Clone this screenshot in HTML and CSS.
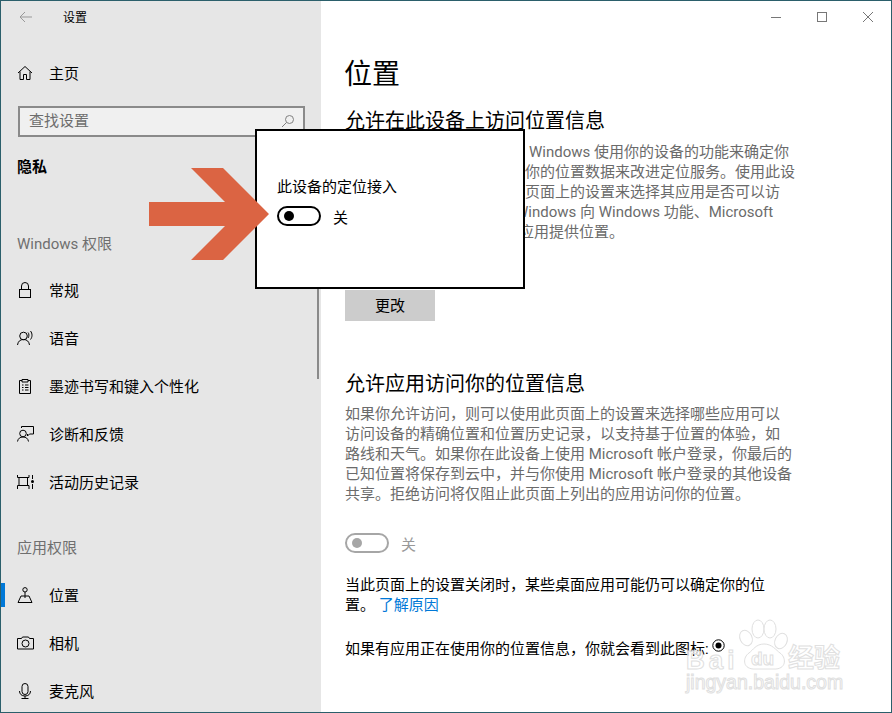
FILE: index.html
```html
<!DOCTYPE html>
<html lang="zh-CN">
<head>
<meta charset="utf-8">
<title>设置</title>
<link rel="stylesheet" href="styles.css">
</head>
<body>
<div class="window">
  <aside class="sidebar">
    <div class="titlebar">
      <svg class="back" width="14" height="12" viewBox="0 0 14 12"><path d="M13 6H1M6 1 1 6l5 5"/></svg>
      <span class="apptitle">设置</span>
    </div>
    <div class="item home">
      <svg class="icon" width="16" height="16" viewBox="0 0 16 16"><path d="M1 8 8 1.500 15 8M3 6.500V14.500H6.500V9.500H9.500V14.500H13V6.500"/></svg>
      <span>主页</span>
    </div>
    <div class="search">
      <span>查找设置</span>
      <svg class="lens" width="14" height="14" viewBox="0 0 14 14"><circle cx="8.500" cy="5.500" r="4"/><path d="M5.500 8.500 1 13"/></svg>
    </div>
    <div class="crumb">隐私</div>
    <div class="group first">Windows 权限</div>
    <div class="list one">
      <div class="item">
        <svg class="icon" width="16" height="16" viewBox="0 0 16 16"><rect x="2.500" y="7.500" width="11" height="8"/><path d="M4.500 7.500V4a3.500 3.500 0 0 1 7 0v3.500"/></svg>
        <span>常规</span>
      </div>
      <div class="item">
        <svg class="icon" width="17" height="16" viewBox="0 0 17 16"><circle cx="6.500" cy="6" r="3.800"/><path d="M.5 15c.5-3.500 2.500-5.500 6-5.500s5.500 2 6 5.500M11 2.500c1.200 1.200 1.200 4 0 5.500M13.500 1c2 2.500 2 6 0 8.500"/></svg>
        <span>语音</span>
      </div>
      <div class="item">
        <svg class="icon" width="16" height="16" viewBox="0 0 16 16"><path d="M5 2.500H2.500V15.500H13.500V2.500H11M5 1.500H11V4H5ZM5 7H6.500M8 7H11.500M5 9.500H6.500M8 9.500H11.500M5 12H6.500M8 12H11.500"/></svg>
        <span>墨迹书写和键入个性化</span>
      </div>
      <div class="item">
        <svg class="icon" width="17" height="16" viewBox="0 0 17 16"><circle cx="6" cy="7.500" r="3.300"/><path d="M.5 15.500c.5-3 2.500-4.500 5.500-4.500s5 1.500 5.500 4.500M4.500 2V.5H16.500V8H12.500L10.500 10V8"/></svg>
        <span>诊断和反馈</span>
      </div>
      <div class="item">
        <svg class="icon" width="17" height="16" viewBox="0 0 17 16"><path d="M.5 1V3.500H12V1M2 4V11M10.500 4V11M.5 15V11.500H12V15M15.500 1V5M15.500 10V15"/><circle class="fill" cx="15.500" cy="7.500" r="1.500"/></svg>
        <span>活动历史记录</span>
      </div>
    </div>
    <div class="group second">应用权限</div>
    <div class="list two">
      <div class="item active">
        <svg class="icon" width="16" height="16" viewBox="0 0 16 16"><circle cx="8" cy="2.800" r="2.200"/><path d="M8 5V11M4 9H12M4 9 1 15.500H15L12 9"/></svg>
        <span>位置</span>
      </div>
      <div class="item">
        <svg class="icon" width="17" height="16" viewBox="0 0 17 16"><path d="M.5 3.500H4.500L5.500 2H11.500L12.500 3.500H16.500V14H.5Z"/><circle cx="8.500" cy="8.500" r="3.500"/></svg>
        <span>相机</span>
      </div>
      <div class="item">
        <svg class="icon" width="16" height="16" viewBox="0 0 16 16"><rect x="5" y=".5" width="6" height="11" rx="3"/><path d="M2.500 8c0 3 2 5 5.500 5s5.500-2 5.500-5M8 13v2.500M4.500 15.500h7"/></svg>
        <span>麦克风</span>
      </div>
    </div>
    <div class="scrollbar"></div>
  </aside>

  <main class="main">
    <div class="controls">
      <svg width="10" height="10" viewBox="0 0 10 10"><path d="M0 5.500H10"/></svg>
      <svg width="10" height="10" viewBox="0 0 10 10"><rect x=".5" y=".5" width="9" height="9"/></svg>
      <svg width="10" height="10" viewBox="0 0 10 10"><path d="M0 0 10 10M10 0 0 10"/></svg>
    </div>
    <h1 class="title">位置</h1>
    <h2 class="heading first-heading">允许在此设备上访问位置信息</h2>
    <div class="desc first-desc">
      <div class="line"><span class="hide h1">如果允许访问此设备位置， </span>Windows 使用你的设备的功能来确定你</div>
      <div class="line"><span class="hide h2">的位置，微软也将会使用</span>你的位置数据来改进定位服务。使用此设</div>
      <div class="line"><span class="hide h3">备的所有人员都可以使用此</span>页面上的设置来选择其应用是否可以访</div>
      <div class="line"><span class="hide h4">问设备位置。允许访问，</span>Windows 向 Windows 功能、Microsoft</div>
      <div class="line"><span class="hide h5">和应用商店应用以及桌面</span>应用提供位置。</div>
    </div>
    <button class="change">更改</button>
    <h2 class="heading second-heading">允许应用访问你的位置信息</h2>
    <div class="desc second-desc">
      <div class="line">如果你允许访问，则可以使用此页面上的设置来选择哪些应用可以</div>
      <div class="line">访问设备的精确位置和位置历史记录，以支持基于位置的体验，如</div>
      <div class="line">路线和天气。如果你在此设备上使用 Microsoft 帐户登录，你最后的</div>
      <div class="line">已知位置将保存到云中，并与你使用 Microsoft 帐户登录的其他设备</div>
      <div class="line">共享。拒绝访问将仅阻止此页面上列出的应用访问你的位置。</div>
    </div>
    <div class="toggle-row muted">
      <span class="toggle"><span class="knob"></span></span>
      <span class="state">关</span>
    </div>
    <p class="note one-note">当此页面上的设置关闭时，某些桌面应用可能仍可以确定你的位<br>置。 <a class="link">了解原因</a></p>
    <p class="note two-note">如果有应用正在使用你的位置信息，你就会看到此图标: <svg class="inuse" width="13" height="13" viewBox="0 0 13 13"><circle cx="6.500" cy="6.500" r="5.700"/><circle class="fill" cx="6.500" cy="6.500" r="3"/></svg></p>
  </main>

  <div class="popup">
    <div class="popup-label">此设备的定位接入</div>
    <div class="toggle-row">
      <span class="toggle"><span class="knob"></span></span>
      <span class="state">关</span>
    </div>
  </div>

  <svg class="arrow" width="120" height="92" viewBox="0 0 120 92"><polygon points="0,34 76,34 42,0 74,0 120,46 74,92 42,92 76,58 0,58"/></svg>

  <svg class="watermark" width="170" height="84" viewBox="0 0 170 84">
    <g class="paw">
      <ellipse cx="63" cy="23" rx="6" ry="8" transform="rotate(-25 63 23)"/>
      <ellipse cx="75" cy="14" rx="6" ry="9"/>
      <ellipse cx="87" cy="14" rx="6" ry="9"/>
      <ellipse cx="98" cy="26" rx="6" ry="8" transform="rotate(25 98 26)"/>
      <path d="M81 29c-8 0-11 6-15 9-6 4-7 15 4 16h23c11-1 10-12 4-16-4-3-8-9-16-9Z"/>
    </g>
    <text class="wm-latin" x="3" y="54">Bai</text>
    <text class="wm-du" x="68" y="50">du</text>
    <text class="wm-cjk" x="105" y="52">经验</text>
    <text class="wm-url" x="3" y="74">jingyan.baidu.com</text>
  </svg>
</div>
</body>
</html>
```

FILE: styles.css
```css
* { box-sizing: border-box; }
html, body { margin: 0; padding: 0; }
body {
  width: 892px;
  height: 713px;
  overflow: hidden;
  background: #fff;
  font-family: Roboto, "Noto Sans CJK SC", sans-serif;
  font-size: 15px;
  line-height: 20px;
  color: #000;
}
.window {
  position: relative;
  display: flex;
  width: 892px;
  height: 713px;
  overflow: hidden;
  border: 1px solid #2b5f6b;
  background: #fff;
}

/* Sidebar */
.sidebar {
  position: relative;
  flex: 0 0 320px;
  height: 711px;
  background: #e6e6e6;
}
.titlebar {
  display: flex;
  align-items: center;
  height: 32px;
  padding-left: 18px;
}
.back { fill: none; stroke: #999; stroke-width: 1; }
.apptitle { margin: 1px 0 0 30px; font-size: 12px; }
.item {
  position: relative;
  display: flex;
  align-items: center;
  height: 48px;
  padding-left: 16px;
}
.item .icon {
  flex: 0 0 auto;
  fill: none;
  stroke: #000;
  stroke-width: 1;
}
.item span { position: absolute; left: 48px; padding-top: 2px; }
.home { margin-top: 16px; }
.fill { fill: #000; stroke: none; }
.item.active::before {
  content: "";
  position: absolute;
  left: 0;
  top: 12px;
  width: 4px;
  height: 24px;
  background: #0078d7;
}
.search {
  display: flex;
  align-items: center;
  justify-content: space-between;
  width: 287px;
  height: 31px;
  margin: 9px 0 0 17px;
  padding: 0 8px 2px 9px;
  border: 2px solid #8a8a8a;
  background: #f0f0f0;
  color: #6d6d6d;
}
.lens { fill: none; stroke: #808080; stroke-width: 1; }
.crumb { margin: 20px 0 0 16px; font-weight: 700; }
.group { margin-left: 16px; color: #6f6f6f; }
.group.first { margin-top: 57px; }
.group.second { margin-top: 32px; }
.list.one { margin-top: 12px; }
.list.two { margin-top: 13px; }
.scrollbar {
  position: absolute;
  right: 2px;
  top: 200px;
  width: 2px;
  height: 178px;
  background: #8a8a8a;
}

/* Main */
.main {
  position: relative;
  flex: 1 1 auto;
  padding-left: 24px;
}
.controls {
  position: absolute;
  top: 11px;
  right: 18px;
  display: flex;
  gap: 36px;
}
.controls svg { fill: none; stroke: #777; stroke-width: 1; }
.title {
  margin: 54px 0 0 -1px;
  font-size: 28px;
  font-weight: 400;
  line-height: 40px;
}
.heading {
  margin: 0;
  font-size: 20px;
  font-weight: 400;
  line-height: 28px;
}
.first-heading { margin-top: 12px; }
.second-heading { margin-top: 49px; }
.desc { color: #6b6b6b; white-space: nowrap; }
.first-desc { margin-top: 7px; }
.second-desc { margin-top: 6px; }
.hide { display: inline-block; overflow: hidden; vertical-align: top; white-space: nowrap; }
.h1 { width: 184px; }
.h2 { width: 180px; }
.h3 { width: 180px; }
.h4 { width: 170px; }
.h5 { width: 174px; }
.change {
  display: block;
  width: 90px;
  height: 31px;
  margin: 48px 0 0;
  padding: 0;
  border: 0;
  background: #cccccc;
  color: #000;
  font: inherit;
}
.toggle-row {
  display: flex;
  align-items: center;
  gap: 12px;
  height: 20px;
}
.state { padding-top: 4px; }
.toggle {
  display: flex;
  align-items: center;
  width: 44px;
  height: 20px;
  padding-left: 5px;
  border: 2px solid #000;
  border-radius: 10px;
}
.knob {
  width: 10px;
  height: 10px;
  border-radius: 50%;
  background: #000;
}
.muted { margin-top: 29px; color: #999; }
.muted .toggle { border-color: #a6a6a6; }
.muted .knob { background: #a6a6a6; }
.note { margin: 0; }
.one-note { margin-top: 22px; }
.two-note { margin-top: 24px; }
.link { color: #0078d7; }
.inuse { vertical-align: 2px; fill: none; stroke: #000; stroke-width: 1; }

/* Annotations laid over the screenshot */
.popup {
  position: absolute;
  left: 254px;
  top: 128px;
  width: 270px;
  height: 160px;
  padding: 46px 20px 0;
  border: 2px solid #000;
  background: #fff;
}
.popup-label { margin-bottom: 9px; }
.arrow {
  position: absolute;
  left: 148px;
  top: 167px;
  fill: #db6443;
}
.watermark {
  position: absolute;
  left: 682px;
  top: 614px;
  fill: rgba(255, 255, 255, .7);
  stroke: #e0e0e0;
  stroke-width: 1;
}
.wm-latin { font: 700 26px "Liberation Sans", sans-serif; letter-spacing: 4px; }
.wm-du { font: 700 19px "Liberation Sans", sans-serif; }
.wm-cjk { font: 700 26px "Noto Sans CJK SC", sans-serif; }
.wm-url { font: 400 19.500px "Liberation Sans", sans-serif; }
```
